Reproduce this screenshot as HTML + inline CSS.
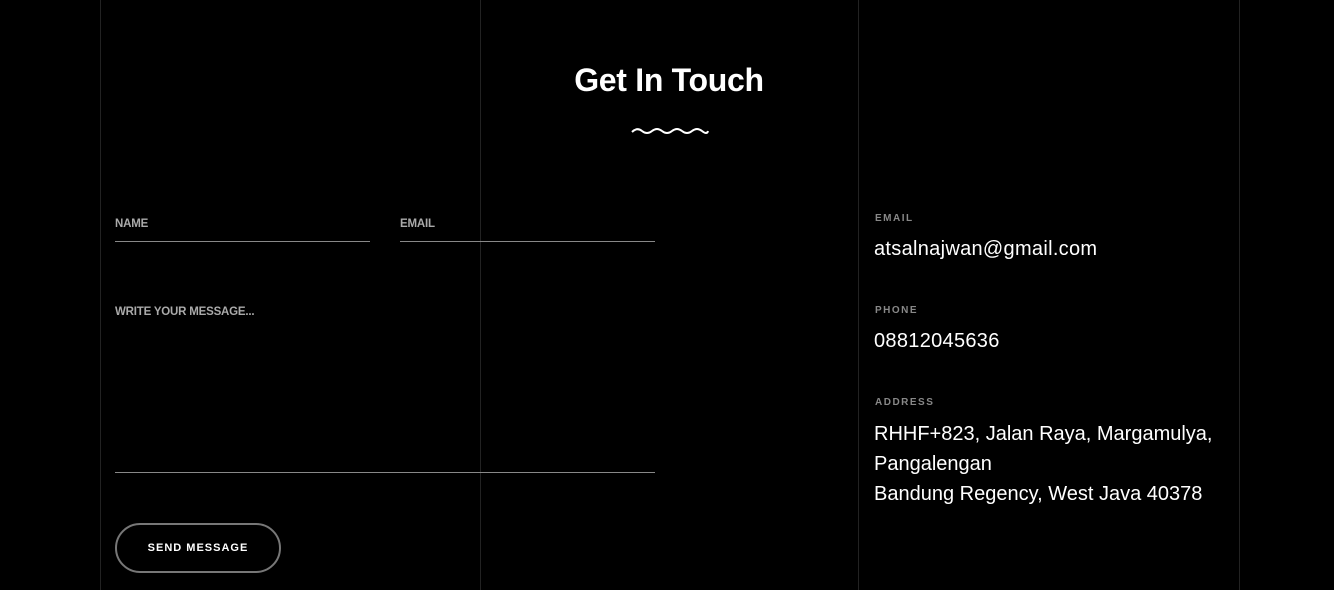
<!DOCTYPE html>
<html><head><style>
body{margin:0;width:1334px;height:590px;background:#000;position:relative;overflow:hidden;font-family:"Liberation Sans",sans-serif;color:#fff}
.v{position:absolute;top:0;width:1px;height:590px;background:#222}
.a{position:absolute;white-space:nowrap}
.lbl{font-size:11.5px;font-weight:bold;color:#aaa;letter-spacing:-0.2px}
.line{position:absolute;height:1px;background:#888}
.cl{font-size:10px;font-weight:bold;color:#888;letter-spacing:1.5px}
.cv{font-size:20px;color:#fff;letter-spacing:0}
</style></head><body>
<div class="v" style="left:100px"></div>
<div class="v" style="left:480px"></div>
<div class="v" style="left:858px"></div>
<div class="v" style="left:1239px"></div>
<div class="a" style="left:0;width:1338px;text-align:center;top:62px;font-size:32px;font-weight:bold;letter-spacing:-0.3px">Get In Touch</div>
<svg class="a" style="left:631px;top:126px" width="78" height="10" viewBox="0 0 78 10"><path d="M1 6 Q6 1 11 5 T21 5 T31 5 T41 5 T51 5 T61 5 T71 5 T77 5" stroke="#fff" stroke-width="2" fill="none"/></svg>
<div class="a lbl" style="left:115px;top:218px">NAME</div>
<div class="line" style="left:115px;top:241px;width:255px"></div>
<div class="a lbl" style="left:400px;top:218px">EMAIL</div>
<div class="line" style="left:400px;top:241px;width:255px"></div>
<div class="a lbl" style="left:115px;top:306px">WRITE YOUR MESSAGE...</div>
<div class="line" style="left:115px;top:472px;width:540px"></div>
<div class="a" style="left:115px;top:523px;width:162px;height:46px;border:2px solid #777;border-radius:25px;text-align:center;line-height:46px;font-size:11px;font-weight:bold;letter-spacing:1px">SEND MESSAGE</div>
<div class="a cl" style="left:875px;top:213px">EMAIL</div>
<div class="a cv" style="left:874px;top:238px;letter-spacing:0.3px">atsalnajwan@gmail.com</div>
<div class="a cl" style="left:875px;top:305px">PHONE</div>
<div class="a cv" style="left:874px;top:330px;letter-spacing:0.3px">08812045636</div>
<div class="a cl" style="left:875px;top:397px">ADDRESS</div>
<div class="a cv" style="left:874px;top:419px;line-height:30px">RHHF+823, Jalan Raya, Margamulya,<br>Pangalengan<br>Bandung Regency, West Java 40378</div>
</body></html>
